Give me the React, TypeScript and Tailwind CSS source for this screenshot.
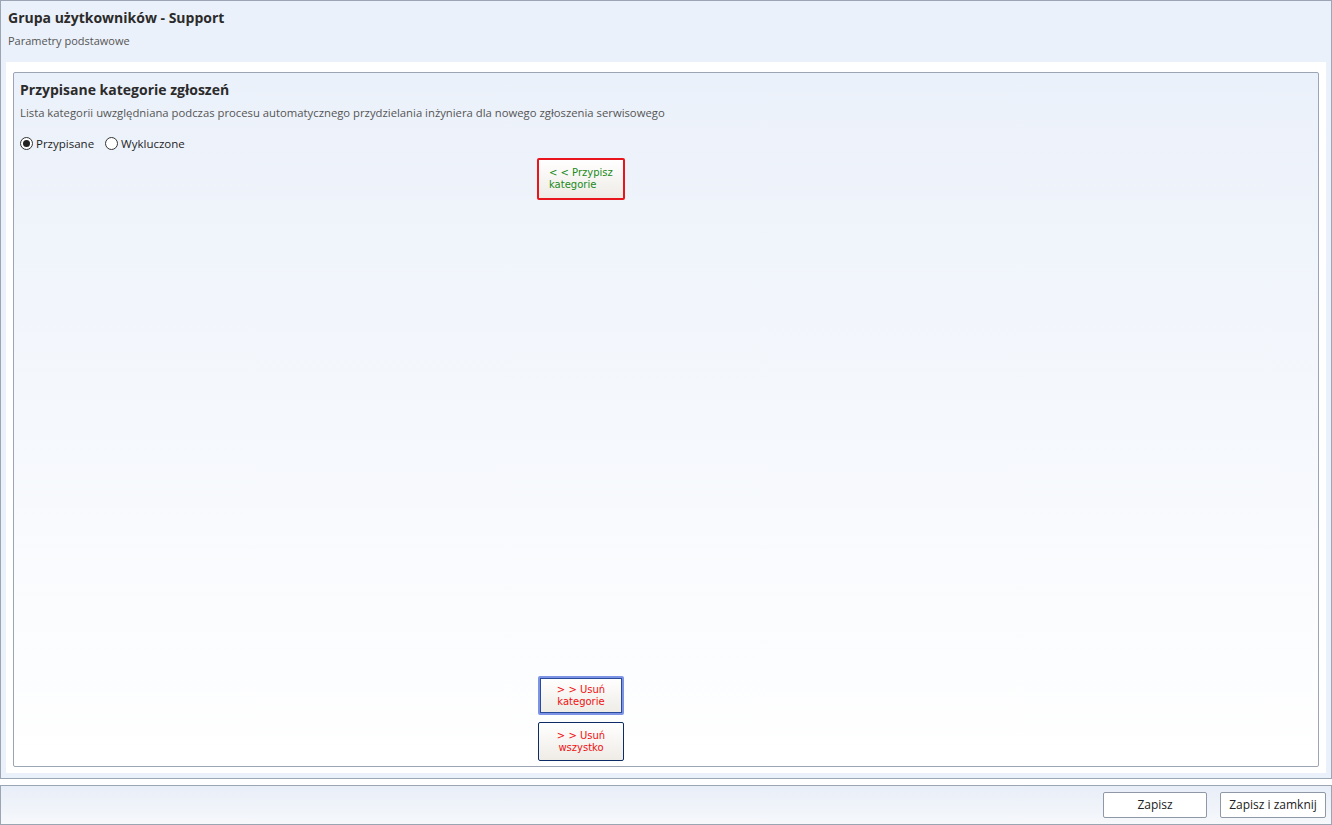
import { useState } from 'react';

const ui = { fontFamily: '"Open Sans", "Noto Sans", sans-serif' };
const legacy = { fontFamily: '"DejaVu Sans", Tahoma, sans-serif' };

function Radio({ checked, label, onClick }: { checked: boolean; label: string; onClick: () => void }) {
  return (
    <label onClick={onClick} className="flex items-center gap-[3px] cursor-pointer text-[11.5px] text-[#1e1e1e]">
      <span className="w-[13px] h-[13px] rounded-full border border-[#333] bg-white flex items-center justify-center">
        {checked && <span className="w-[7px] h-[7px] rounded-full bg-[#222]" />}
      </span>
      {label}
    </label>
  );
}

type Tone = 'green' | 'red';

function ActionButton({ children, tone, variant }: { children: React.ReactNode; tone: Tone; variant?: 'alert' | 'focus' }) {
  const color = tone === 'green' ? 'text-[#1a8a1a]' : 'text-[#f01010]';
  let frame = 'w-[86px] h-[39px] border border-[#0d2c66]';
  if (variant === 'focus') frame = 'w-[86px] h-[39px] border-2 border-[#7d94e6] shadow-[inset_0_0_0_1px_#2a4b9a]';
  if (variant === 'alert') frame = 'w-[88px] h-[42px] border-2 border-[#e8151c]';
  return (
    <button
      style={legacy}
      className={`rounded-[2px] text-[10px] leading-[12px] text-center bg-gradient-to-b from-white to-[#efece6] ${color} ${frame}`}
    >
      {children}
    </button>
  );
}

export default function App() {
  const [mode, setMode] = useState<'in' | 'out'>('in');

  return (
    <div style={ui} className="w-[1332px] h-[825px] bg-white flex flex-col overflow-hidden">
      <div className="h-[779px] border border-[#9ba5b4] bg-[#ebf1fa] flex flex-col px-[5px] pb-[5px]">
        <div className="h-[61px] pl-[2px] pt-[6px]">
          <h1 className="text-[14px] font-bold text-[#2b2b2b] leading-[22px]">Grupa użytkowników - Support</h1>
          <p className="text-[11px] text-[#555] mt-[4px]">Parametry podstawowe</p>
        </div>
        <div className="flex-1 bg-white px-[7px] pt-[10px] pb-[6px] flex">
          <section className="flex-1 border border-[#9ba5b4] rounded-[2px] bg-gradient-to-b from-[#ebf1fa] to-white px-[6px] flex flex-col">
            <h2 className="text-[14px] font-bold text-[#2b2b2b] mt-[6px] leading-[22px]">Przypisane kategorie zgłoszeń</h2>
            <p className="text-[11.3px] text-[#555] mt-[4px]">
              Lista kategorii uwzględniana podczas procesu automatycznego przydzielania inżyniera dla nowego zgłoszenia serwisowego
            </p>
            <div className="flex gap-[11px] mt-[13px]">
              <Radio checked={mode === 'in'} label="Przypisane" onClick={() => setMode('in')} />
              <Radio checked={mode === 'out'} label="Wykluczone" onClick={() => setMode('out')} />
            </div>
            <div className="flex-1 flex flex-col pl-[517px] pb-[5px]">
              <div className="mt-[6px]">
                <ActionButton tone="green" variant="alert">
                  <span className="block text-left pl-[10px]">&lt; &lt; Przypisz<br />kategorie</span>
                </ActionButton>
              </div>
              <div className="flex-1" />
              <div className="flex flex-col gap-[7px] pl-[1px]">
                <ActionButton tone="red" variant="focus">
                  &gt; &gt; Usuń<br />kategorie
                </ActionButton>
                <ActionButton tone="red">
                  &gt; &gt; Usuń<br />wszystko
                </ActionButton>
              </div>
            </div>
          </section>
        </div>
      </div>
      <div className="mt-[6px] h-[40px] border border-[#9ba5b4] bg-gradient-to-b from-[#e8eef8] to-[#f6f8fb] flex items-center justify-end gap-[13px] pr-[5px]">
        <button className="w-[104px] h-[26px] border border-[#8f98a6] rounded-[2px] bg-white text-[12px] text-[#222]">Zapisz</button>
        <button className="w-[106px] h-[26px] border border-[#8f98a6] rounded-[2px] bg-white text-[12px] text-[#222]">Zapisz i zamknij</button>
      </div>
    </div>
  );
}
